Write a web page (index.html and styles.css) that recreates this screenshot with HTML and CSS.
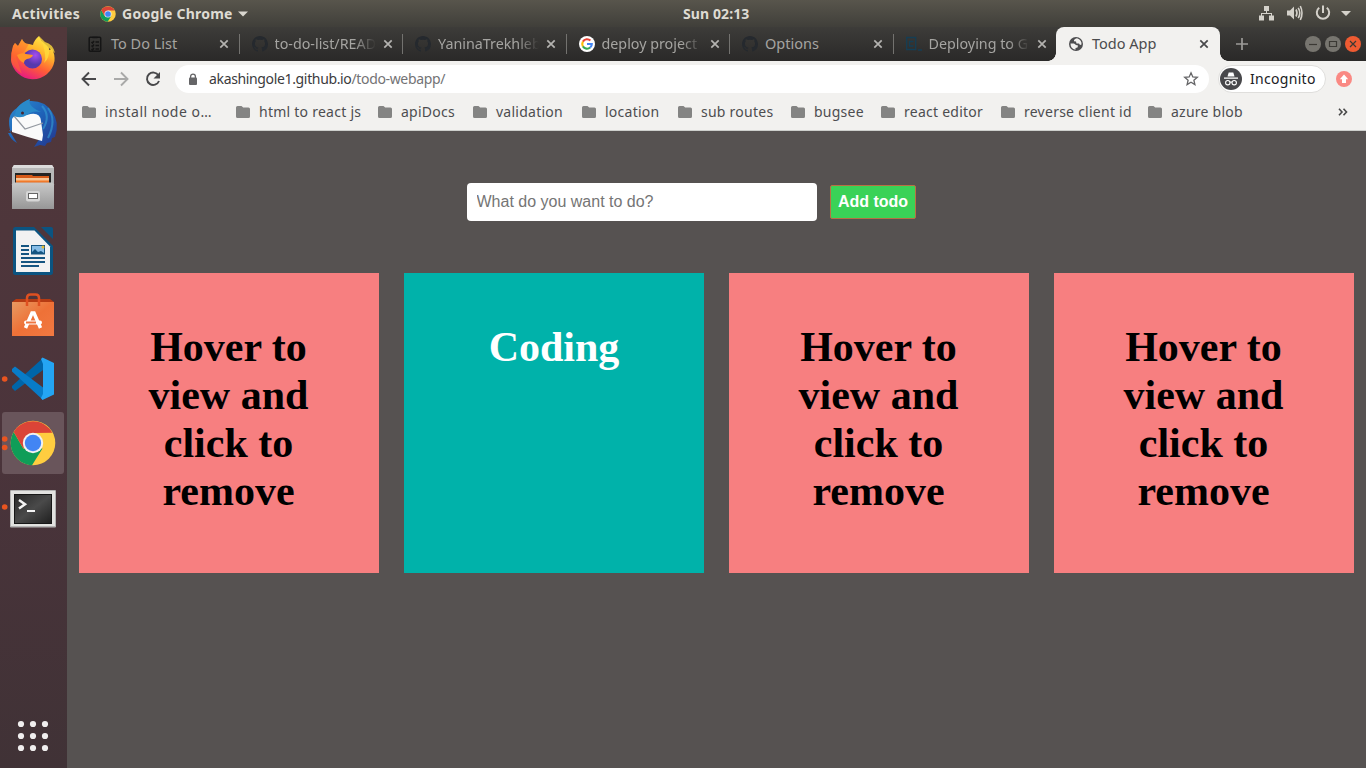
FILE: index.html
```html
<!DOCTYPE html>
<html lang="en">
<head>
<meta charset="utf-8">
<title>Todo App</title>
<link rel="stylesheet" href="styles.css">
</head>
<body>
<svg class="defs" aria-hidden="true">
  <defs>
    <linearGradient id="fox" x1=".8" y1="0" x2=".3" y2="1"><stop offset="0" stop-color="#fff04a"/><stop offset=".35" stop-color="#ffb52b"/><stop offset=".65" stop-color="#ff5f35"/><stop offset="1" stop-color="#e61587"/></linearGradient>
    <radialGradient id="globe" cx=".65" cy=".3"><stop offset="0" stop-color="#a44cf0"/><stop offset="1" stop-color="#5539ad"/></radialGradient>
    <linearGradient id="bird" x1="0" y1="0" x2="1" y2="1"><stop offset="0" stop-color="#2f8ed0"/><stop offset=".5" stop-color="#1e62b8"/><stop offset="1" stop-color="#25358b"/></linearGradient>
    <linearGradient id="metal" x1="0" y1="0" x2="0" y2="1"><stop offset="0" stop-color="#c9c9c9"/><stop offset="1" stop-color="#979797"/></linearGradient>
    <linearGradient id="bag" x1="0" y1="0" x2="1" y2="1"><stop offset="0" stop-color="#e89a62"/><stop offset=".5" stop-color="#ee7137"/><stop offset="1" stop-color="#f17942"/></linearGradient>
    <linearGradient id="screen" x1="0" y1="0" x2="1" y2="1"><stop offset="0" stop-color="#292929"/><stop offset=".5" stop-color="#4a4a4a"/><stop offset="1" stop-color="#202020"/></linearGradient>
  </defs>
  <symbol id="chrome" viewBox="0 0 46 46">
    <circle cx="23" cy="23" r="22.3" fill="#ffcd40"/>
    <path d="M3.7 11.9A22.3 22.3 0 0 0 22 45.3L32.5 28.5 13.3 28.5z" fill="#0f9d58"/>
    <path d="M3.7 11.9A22.3 22.3 0 0 1 42.3 12.7L23 13 13.3 28.5z" fill="#db4437"/>
    <circle cx="23" cy="23" r="10.2" fill="#f1f1f1"/><circle cx="23" cy="23" r="8.2" fill="#4285f4"/>
  </symbol>
  <symbol id="folder" viewBox="0 0 14 12"><path d="M1.5 0H5.5L7.2 1.500H12.5Q14 1.500 14 3V10.5Q14 12 12.5 12H1.5Q0 12 0 10.5V1.5Q0 0 1.5 0z" fill="#848483"/></symbol>
  <symbol id="close" viewBox="0 0 10 10"><path d="M1.3 1.3L8.7 8.7M8.7 1.3L1.3 8.7" fill="none" stroke="currentColor" stroke-width="1.7"/></symbol>
  <symbol id="github" viewBox="0 0 16 16"><path fill="#25292e" fill-rule="evenodd" d="M8 0C3.6 0 0 3.6 0 8c0 3.5 2.3 6.500 5.500 7.600.4.100.5-.2.5-.4v-1.500c-2 .4-2.600-.5-2.700-1-.1-.2-.5-.9-.8-1.100-.3-.2-.7-.5 0-.5.600 0 1.100.600 1.200.8.700 1.200 1.900.9 2.300.7.100-.5.300-.9.500-1.100-1.800-.2-3.600-.9-3.600-4 0-.9.300-1.600.8-2.100-.1-.2-.4-1 .1-2.100 0 0 .7-.2 2.200.8a7.400 7.400 0 0 1 4 0c1.500-1 2.200-.8 2.200-.8.400 1.100.200 1.900.100 2.100.5.600.8 1.300.8 2.100 0 3.100-1.900 3.700-3.700 3.900.300.300.600.8.600 1.500v2.200c0 .2.100.5.600.4A8 8 0 0 0 16 8c0-4.400-3.600-8-8-8z"/></symbol>
</svg>

<header class="topbar">
  <div class="top-left">
    <span class="activities">Activities</span>
    <svg class="top-chrome"><use href="#chrome"/></svg>
    <span class="app-name">Google Chrome</span>
    <svg class="caret" viewBox="0 0 10 6"><path d="M0 .5H10L5 5.500z" fill="#d9d6cf"/></svg>
  </div>
  <span class="clock">Sun 02:13</span>
  <svg class="tray" viewBox="1256 0 110 27">
    <g fill="#d4d1ca"><path d="M1264 6h5v5h-5zM1259 15.500h5v5h-5zM1269 15.500h5v5h-5z"/><path d="M1266 11h1v2h5v3h-1v-2h-9v2h-1v-3h5z"/>
    <path d="M1287 10.500h3l4-4v13l-4-4h-3zM1341 11h10l-5 5z"/></g>
    <g fill="none" stroke="#d4d1ca" stroke-width="1.600"><path d="M1296 9.500q2 3.500 0 7M1298.200 7.800q3.200 5.200 0 10.400M1300.300 6q3.400 7 0 14"/><path stroke-width="2" d="M1319.200 7.700A6.200 6.200 0 1 0 1326.800 7.700M1323 5.500v7.500"/></g>
  </svg>
</header>

<div class="desktop">
  <nav class="dock">
    <svg class="dock-item" viewBox="0 26 67 64">
      <path d="M13 45l2-3 3 3 4-7q2 5 7 5l4 1q1-5 6-9 2 5 6 8 4 3 4 6l3-1q3 5 2.500 12A22 22 0 0 1 11 59q0-8 2-14z" fill="url(#fox)"/>
      <path d="M13 45l2-3 3 3 4-7q2 5 7 5l-5 8-8 5 6 17q-11-9-11-13 0-8 2-14z" fill="#ff6b2c" opacity=".5"/>
      <circle cx="32.500" cy="58" r="9.500" fill="url(#globe)"/>
      <path d="M17 54q5-3 9-1l7 1q-1 3-6 4-3 1-3 4-5-2-7-8z" fill="#ff9528"/>
      <path d="M39 35q5 9 6 18 1 5-1 9 6-5 5-15l6 5Q53 43 45 41z" fill="#ffdb3b" opacity=".8"/>
    </svg>
    <svg class="dock-item" viewBox="0 91 67 64">
      <path d="M11 133Q5 115 17 108q5-6 13-9l-1 2q16-1 23 11 8 10 3 25l-3 1-1 4-4 1-2 3-5-1-6 2 6-9-31-8 8 13q-6-3-9-10z" fill="url(#bird)"/>
      <path d="M12 132V119q2-4 9-3 5-2 6-1 13-4 14 6l2 14-1 6q-15-4-30-9z" fill="#fafafa"/>
      <path d="M14 116l11 13 18-6" fill="none" stroke="#9499a1" stroke-width="1.200"/>
      <path d="M17 108q5-6 13-9-3 7 11 13-9-2-14 3-6 4-13 1z" fill="#2989c9"/>
      <path d="M42 106q9 10 1 23M48 108q9 12 0 30" fill="none" stroke="#3499d1" stroke-width="2" opacity=".65"/>
      <circle cx="22.500" cy="113" r="1.500" fill="#482632"/>
    </svg>
    <svg class="dock-item" viewBox="0 155 67 64">
      <path d="M14 165H52l2 3v40H12v-40z" fill="#b9b9b9"/><path d="M14 165H52l2 3H12z" fill="#dcdcdc"/>
      <path d="M15 173h36v12H15z" fill="#242424"/><path d="M16 175h16l1 1h16v9H16z" fill="#d65a19"/><path d="M16 178h33v3H16z" fill="#f8c595"/><path d="M16 180.500h33v2H16z" fill="#f17a2a"/>
      <path d="M14 182.500h38l2 2V209H12v-24.500z" fill="url(#metal)"/>
      <rect x="26" y="191" width="14" height="10.500" rx="2" fill="#d6d6d6"/><rect x="28.500" y="193.500" width="9" height="5" fill="#fff" stroke="#666"/>
    </svg>
    <svg class="dock-item" viewBox="0 219 67 64">
      <path d="M15.500 227H34l19 19v27q0 2-2.500 2h-35q-2.500 0-2.500-2.500v-43q0-2.500 2.500-2.500z" fill="#0b5481"/><path d="M41 227h10q2 0 2 2v10z" fill="#0b5481"/>
      <path d="M16 230.500h18.500L50 246.500V272H16z" fill="#f2f2f2"/>
      <path d="M21 246h8M21 250h8M21 254h8M21 258h24M21 262h24M21 266h18" stroke="#155581" stroke-width="1.800"/><path d="M31 245h14v9.500H31z" fill="#155581"/><path d="M32 246h12v7l-3-2-3 1-3-3-3 3z" fill="#87bde6"/><circle cx="43" cy="247" r="1.500" fill="#e8bd33"/>
    </svg>
    <svg class="dock-item" viewBox="0 283 67 64">
      <path d="M12 302l4-3h34l4 3z" fill="#b63b13"/><path d="M12 302h42v34H12z" fill="url(#bag)"/>
      <path d="M27 306v-8q0-3.500 3.500-3.500h5q3.500 0 3.500 3.500v8" fill="none" stroke="#df5021" stroke-width="2.500"/>
      <path d="M25.500 328l6.500-15h2l6.500 15" fill="none" stroke="#fff" stroke-width="3.500"/><rect x="24" y="320.500" width="18" height="4" rx="2" fill="#fff"/><path d="M26 322.500h10" stroke="#ef7540" stroke-width="2"/>
    </svg>
    <svg class="dock-item" viewBox="0 347 67 64">
      <circle cx="4.700" cy="379" r="2.800" fill="#e95420"/>
      <path d="M12 388l3 3 28-21V358L12 386z" fill="#0065a9"/><path d="M12 369l3-2.500 28 21V400L12 371.500z" fill="#087cc8"/><path d="M42.500 357.500L54 363v31.500L42.500 400 41 398l2-4v-30l-2-5z" fill="#24a5f3"/>
    </svg>
    <svg class="dock-item" viewBox="0 411 67 64">
      <rect x="2" y="412" width="62" height="62" rx="3" fill="#69555b"/><circle cx="4.700" cy="439" r="2.800" fill="#e95420"/><circle cx="4.700" cy="447.500" r="2.800" fill="#e95420"/>
      <use href="#chrome" x="10" y="420" width="46" height="46"/>
    </svg>
    <svg class="dock-item" viewBox="0 475 67 64">
      <circle cx="4.700" cy="507" r="2.800" fill="#e95420"/>
      <rect x="10" y="490" width="46" height="37.500" rx="1" fill="#b4b4b4"/><rect x="11" y="491" width="44" height="35" fill="#e2e2e0"/><rect x="14" y="494" width="38" height="30" fill="#171717"/><rect x="15" y="495" width="36" height="28" fill="url(#screen)"/>
      <path d="M19 500l6 4.200-6 4.300" fill="none" stroke="#f4f4f4" stroke-width="2.500"/><path d="M27 511h8" stroke="#f4f4f4" stroke-width="2"/>
    </svg>
    <svg class="dock-item app-grid" viewBox="0 704 67 64"><g fill="#f0eeee"><circle cx="21" cy="724" r="3.100"/><circle cx="33" cy="724" r="3.100"/><circle cx="45" cy="724" r="3.100"/><circle cx="21" cy="736" r="3.100"/><circle cx="33" cy="736" r="3.100"/><circle cx="45" cy="736" r="3.100"/><circle cx="21" cy="748" r="3.100"/><circle cx="33" cy="748" r="3.100"/><circle cx="45" cy="748" r="3.100"/></g></svg>
  </nav>

  <div class="browser">
    <div class="tabs">
      <div class="tab"><svg class="fav" viewBox="0 0 16 16"><g fill="none" stroke="#151515" stroke-width="1.500"><rect x="1.200" y="1.200" width="11.500" height="14" rx="1"/><path d="M4.500 1.500h5M3.500 6l1 1 1.500-2M7.500 6h3.500M3.500 9.500l1 1L6 8.500M7.500 9.500h3.500M3.500 13l1 1L6 12M7.500 13h3.500"/></g></svg><span class="title">To Do List</span><svg class="close"><use href="#close"/></svg></div>
      <div class="tab"><svg class="fav"><use href="#github"/></svg><span class="title faded">to-do-list/READ</span><svg class="close"><use href="#close"/></svg></div>
      <div class="tab"><svg class="fav"><use href="#github"/></svg><span class="title faded">YaninaTrekhleb</span><svg class="close"><use href="#close"/></svg></div>
      <div class="tab"><svg class="fav" viewBox="0 0 16 16"><circle cx="8" cy="8" r="8" fill="#fff"/><g fill="none" stroke-width="2.100"><path d="M3.900 5.600A4.800 4.800 0 0 1 11.400 4.600" stroke="#ea4335"/><path d="M3.900 5.600A4.800 4.800 0 0 0 3.900 10.400" stroke="#fbbc05"/><path d="M3.900 10.400A4.800 4.800 0 0 0 11.200 11.500" stroke="#34a853"/><path d="M8 8h4.800q0 2.200-1.600 3.500" stroke="#4285f4"/></g></svg><span class="title faded">deploy project</span><svg class="close"><use href="#close"/></svg></div>
      <div class="tab"><svg class="fav"><use href="#github"/></svg><span class="title">Options</span><svg class="close"><use href="#close"/></svg></div>
      <div class="tab last"><svg class="fav" viewBox="0 0 16 16"><g fill="none" stroke="#153e54" stroke-width="1.300"><path d="M.7 1.500h9v12h-9zM7.500 5.500H3.500v4.500h4M12 14h4"/></g></svg><span class="title faded">Deploying to G</span><svg class="close"><use href="#close"/></svg></div>
      <div class="tab active"><svg class="fav" viewBox="0 0 16 16"><circle cx="7" cy="8" r="7" fill="#4d4d4f"/><path d="M8 2.200Q4.500 3.200 5 5.200l2 .3.500 2 2.500 0 1 1.500 1.500-.5Q13 4 8 2.200zM1.500 7.500h3.500l2 1.500 2 .5-.5 2-2 .5v1.700Q1.500 13 1.500 7.500z" fill="#f2f1ef"/></svg><span class="title">Todo App</span><svg class="close"><use href="#close"/></svg></div>
      <svg class="window-controls" viewBox="1220 27 146 34">
        <path d="M1242 38v12M1236 44h12" stroke="#9c9b98" stroke-width="1.700"/>
        <circle cx="1313" cy="44" r="8" fill="#77756f"/><circle cx="1333" cy="44" r="8" fill="#77756f"/><circle cx="1353" cy="44" r="8" fill="#ef5b32"/>
        <g fill="none" stroke="#3b3934" stroke-width="1.200"><path d="M1309 44.500h8"/><path d="M1329.500 41.500h7v5h-7z"/><path d="M1350 41l6 6M1356 41l-6 6"/></g>
      </svg>
    </div>

    <div class="toolbar">
      <svg class="nav-icons" viewBox="67 61 108 36"><g fill="none" stroke-width="1.900"><path d="M96 79H83M89 72.500L82.500 79 89 85.500" stroke="#48484a"/><path d="M114 79h13M121 72.500l6.500 6.500-6.500 6.500" stroke="#a9a9a8"/><path d="M158.500 75.500A6.200 6.200 0 1 0 159 81" stroke="#48484a"/></g><path d="M160 72v6.500h-6.500z" fill="#48484a"/></svg>
      <div class="address">
        <svg class="lock" viewBox="0 0 10 13"><rect x="1" y="4.500" width="8" height="7.500" rx="1" fill="#656567"/><path d="M2.600 5V3.500a2.400 2.400 0 0 1 4.800 0V5" fill="none" stroke="#656567" stroke-width="1.300"/></svg>
        <span class="url">akashingole1.github.io<span class="path">/todo-webapp/</span></span>
        <svg class="star" viewBox="0 0 16 16"><path d="M8 1.800l1.800 4.100 4.500.4-3.400 2.900 1 4.400L8 11.300l-3.900 2.300 1-4.400-3.400-2.900 4.500-.4z" fill="none" stroke="#656567" stroke-width="1.300"/></svg>
      </div>
      <div class="incognito">
        <svg class="spy" viewBox="0 0 22 22"><circle cx="11" cy="11" r="11" fill="#48484b"/><path d="M7.500 8.500L8.700 4.500h4.600l1.200 4zM4 9.500h14v1.200H4z" fill="#fff"/><g fill="none" stroke="#fff" stroke-width="1.100"><circle cx="7.800" cy="14.700" r="2.200"/><circle cx="14.200" cy="14.700" r="2.200"/><path d="M10 14.300q1-.7 2 0"/></g></svg>
        <span class="incognito-label">Incognito</span>
      </div>
      <svg class="update" viewBox="0 0 16 16"><circle cx="8" cy="8" r="8" fill="#fa8983"/><path d="M8 3.500l4.200 4.700H10V12H6V8.200H3.800z" fill="#fff"/></svg>
    </div>

    <div class="bookmarks">
      <div class="bm wide"><svg><use href="#folder"/></svg><span>install node o…</span></div>
      <div class="bm"><svg><use href="#folder"/></svg><span>html to react js</span></div>
      <div class="bm"><svg><use href="#folder"/></svg><span>apiDocs</span></div>
      <div class="bm"><svg><use href="#folder"/></svg><span>validation</span></div>
      <div class="bm"><svg><use href="#folder"/></svg><span>location</span></div>
      <div class="bm"><svg><use href="#folder"/></svg><span>sub routes</span></div>
      <div class="bm"><svg><use href="#folder"/></svg><span>bugsee</span></div>
      <div class="bm"><svg><use href="#folder"/></svg><span>react editor</span></div>
      <div class="bm"><svg><use href="#folder"/></svg><span>reverse client id</span></div>
      <div class="bm"><svg><use href="#folder"/></svg><span>azure blob</span></div>
      <svg class="more" viewBox="0 0 10 8"><path d="M1 .8L4 4 1 7.200M5.500.8L8.500 4 5.500 7.200" fill="none" stroke="#484848" stroke-width="1.600"/></svg>
    </div>

    <main class="page">
      <form class="todo-form"><input class="todo-input" type="text" placeholder="What do you want to do?"><button class="add" type="button">Add todo</button></form>
      <section class="cards">
        <article class="card"><h1>Hover to view and click to remove</h1></article>
        <article class="card revealed"><h1>Coding</h1></article>
        <article class="card"><h1>Hover to view and click to remove</h1></article>
        <article class="card"><h1>Hover to view and click to remove</h1></article>
      </section>
    </main>
  </div>
</div>
</body>
</html>
```
FILE: styles.css
```css
* { box-sizing: border-box; }
body { margin: 0; width: 1366px; height: 768px; overflow: hidden; font-family: "Noto Sans", sans-serif; font-size: 14px; }
svg { display: block; flex: none; }
.defs { position: absolute; width: 0; height: 0; }

.topbar { display: grid; grid-template-columns: 683px 573px 110px; align-items: center; height: 27px; background: linear-gradient(#58554c, #403f3a); color: #dedbd3; font-weight: 700; white-space: nowrap; }
.top-left { display: flex; align-items: center; padding-left: 12px; }
.activities { width: 88px; letter-spacing: .3px; }
.activities, .app-name, .clock { padding-bottom: 1px; }
.top-chrome { width: 16px; height: 16px; margin-right: 6px; }
.app-name { width: 116px; letter-spacing: .25px; }
.caret { width: 10px; height: 6px; }
.clock { letter-spacing: .1px; }
.tray { width: 110px; height: 27px; }

.desktop { display: flex; height: 741px; }
.dock { display: flex; flex-direction: column; width: 67px; background: linear-gradient(#51383b, #4b343b 55%, #403236); }
.dock-item { width: 67px; height: 64px; }
.app-grid { margin-top: auto; }
.browser { display: flex; flex-direction: column; width: 1299px; background: #f2f1ef; }

.tabs { display: flex; height: 34px; padding-left: 8px; background: linear-gradient(#3d3c39, #2a2928); color: #a5a4a1; }
.tab { position: relative; display: flex; flex: none; align-items: center; width: 163.5px; padding-left: 13px; white-space: nowrap; }
.tab::after { content: ""; flex: none; width: 1px; height: 20px; margin-left: 9.5px; background: #73726f; }
.tab.last::after, .tab.active::after { visibility: hidden; }
.fav { width: 16px; height: 16px; margin-right: 7px; }
.title { flex: none; width: 102px; padding-bottom: 2px; font-size: 14.5px; }
.title.faded { font-size: 14.3px; -webkit-mask-image: linear-gradient(90deg, #000 78%, transparent 99%); mask-image: linear-gradient(90deg, #000 78%, transparent 99%); }
.close { width: 10px; height: 10px; margin-left: 6px; color: #b4b3b0; }
.tab.active { background: #f2f1ef; color: #4b4b4d; border-radius: 8px 8px 0 0; }
.tab.active .close { color: #48484a; margin-left: 5px; }
.tab.active::before { content: ""; position: absolute; left: -8px; right: -8px; bottom: 0; height: 8px; background: radial-gradient(circle at 0 0, transparent 7.5px, #f2f1ef 8px) left / 8px 8px no-repeat, radial-gradient(circle at 100% 0, transparent 7.5px, #f2f1ef 8px) right / 8px 8px no-repeat; }
.window-controls { width: 146px; height: 34px; }

.toolbar { display: flex; align-items: center; height: 36px; }
.nav-icons { width: 108px; height: 36px; }
.address { display: flex; align-items: center; width: 1034px; height: 28px; padding: 0 10px 0 13px; border-radius: 14px; background: #fff; color: #3b3b3d; }
.lock { width: 10px; height: 13px; margin-right: 11px; }
.url { flex: 1; padding-bottom: 1px; letter-spacing: -.35px; }
.path { color: #737375; }
.star { width: 16px; height: 16px; }
.incognito { display: flex; align-items: center; gap: 8px; width: 108px; height: 28px; margin-left: 9px; padding-left: 1px; border: 1px solid #dfdedc; border-radius: 14px; background: #fff; color: #202124; }
.incognito-label { padding-bottom: 1px; letter-spacing: .3px; }
.spy { width: 22px; height: 22px; }
.update { width: 16px; height: 16px; margin-left: 10px; }

.bookmarks { display: grid; grid-template-columns: 154px 142px 95px 109px 96px 113px 90px 120px 147px 190px 10px; align-items: center; height: 34px; padding: 0 0 4px 15px; border-bottom: 1px solid #cdcfcc; color: #4d4d4f; white-space: nowrap; letter-spacing: .25px; }
.bm { display: flex; align-items: center; gap: 9px; }
.bm.wide { letter-spacing: .5px; }
.bm svg { width: 14px; height: 12px; }
.more { width: 10px; height: 8px; }

.page { flex: 1; padding: 52px 12px 0; background: #565251; }
.todo-form { display: flex; align-items: center; gap: 13px; height: 38px; margin-left: 388px; font-family: "Liberation Sans", Arial, sans-serif; }
.todo-input { width: 350px; height: 38px; padding: 0 9.5px; border: 0; border-radius: 4px; font: 16px "Liberation Sans", Arial, sans-serif; }
.todo-input::placeholder { color: #757575; }
.add { width: 86px; height: 34px; padding: 0; border: 1px solid #b87043; border-radius: 2px; background: #3ad257; color: #fff; font: bold 16px "Liberation Sans", Arial, sans-serif; }
.cards { display: grid; grid-template-columns: repeat(4, 300px); gap: 25px; margin-top: 52px; }
.card { height: 300px; padding: 50px 51px 50px 50px; background: #f77f80; color: #000; text-align: center; }
.card h1 { margin: 0; font: bold 42px/48px "Liberation Serif", "Times New Roman", serif; }
.card.revealed { padding-right: 50px; background: #00b2aa; color: #fff; }
```
